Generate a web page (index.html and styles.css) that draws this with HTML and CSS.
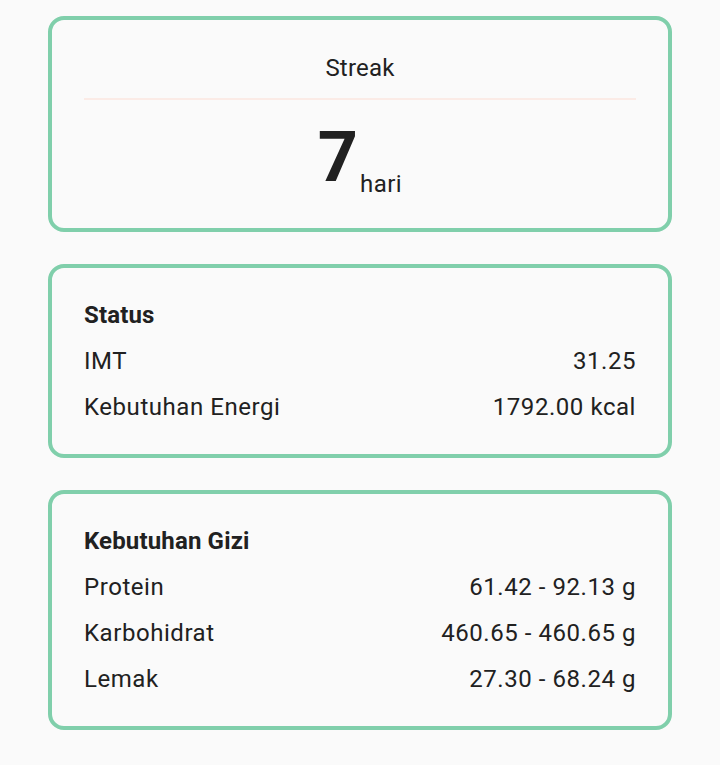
FILE: index.html
```html
<!DOCTYPE html>
<html lang="id">
<head>
<meta charset="utf-8">
<link rel="stylesheet" href="styles.css">
</head>
<body>
<main class="page">
  <section class="card streak">
    <div class="streak-title">Streak</div>
    <div class="divider"></div>
    <div class="streak-value">
      <span class="num">7</span>
      <span class="unit">hari</span>
    </div>
  </section>
  <section class="card">
    <div class="row head">Status</div>
    <div class="row"><span>IMT</span><span>31.25</span></div>
    <div class="row"><span>Kebutuhan Energi</span><span>1792.00 kcal</span></div>
  </section>
  <section class="card">
    <div class="row head">Kebutuhan Gizi</div>
    <div class="row"><span>Protein</span><span>61.42 - 92.13 g</span></div>
    <div class="row"><span>Karbohidrat</span><span>460.65 - 460.65 g</span></div>
    <div class="row"><span>Lemak</span><span>27.30 - 68.24 g</span></div>
  </section>
</main>
</body>
</html>
```

FILE: styles.css
```css
html, body {
  margin: 0;
  padding: 0;
  background: #fafafa;
}
body {
  font-family: Roboto, "Noto Sans", sans-serif;
  color: #212121;
  font-size: 24px;
}
.page {
  padding: 16px 48px;
  display: flex;
  flex-direction: column;
  gap: 32px;
}
.card {
  border: 4px solid #80cfab;
  border-radius: 16px;
  padding: 24px 32px;
  display: flex;
  flex-direction: column;
}
.row {
  display: flex;
  justify-content: space-between;
  height: 46px;
  line-height: 46px;
  letter-spacing: 0.55px;
}
.row.head {
  font-weight: 700;
  letter-spacing: 0.15px;
}
.streak-title {
  text-align: center;
  line-height: 46px;
  letter-spacing: 0.2px;
  padding-top: 1px;
}
.divider {
  height: 2px;
  background: #fbebe6;
  margin-top: 7px;
}
.streak-value {
  display: flex;
  justify-content: center;
  align-items: flex-end;
  gap: 2px;
  margin-top: 16px;
  margin-bottom: 6px;
}
.num {
  font-size: 70px;
  font-weight: 700;
  line-height: 82px;
}
.unit {
  font-size: 24px;
  line-height: 28px;
  letter-spacing: 0.5px;
}
```
